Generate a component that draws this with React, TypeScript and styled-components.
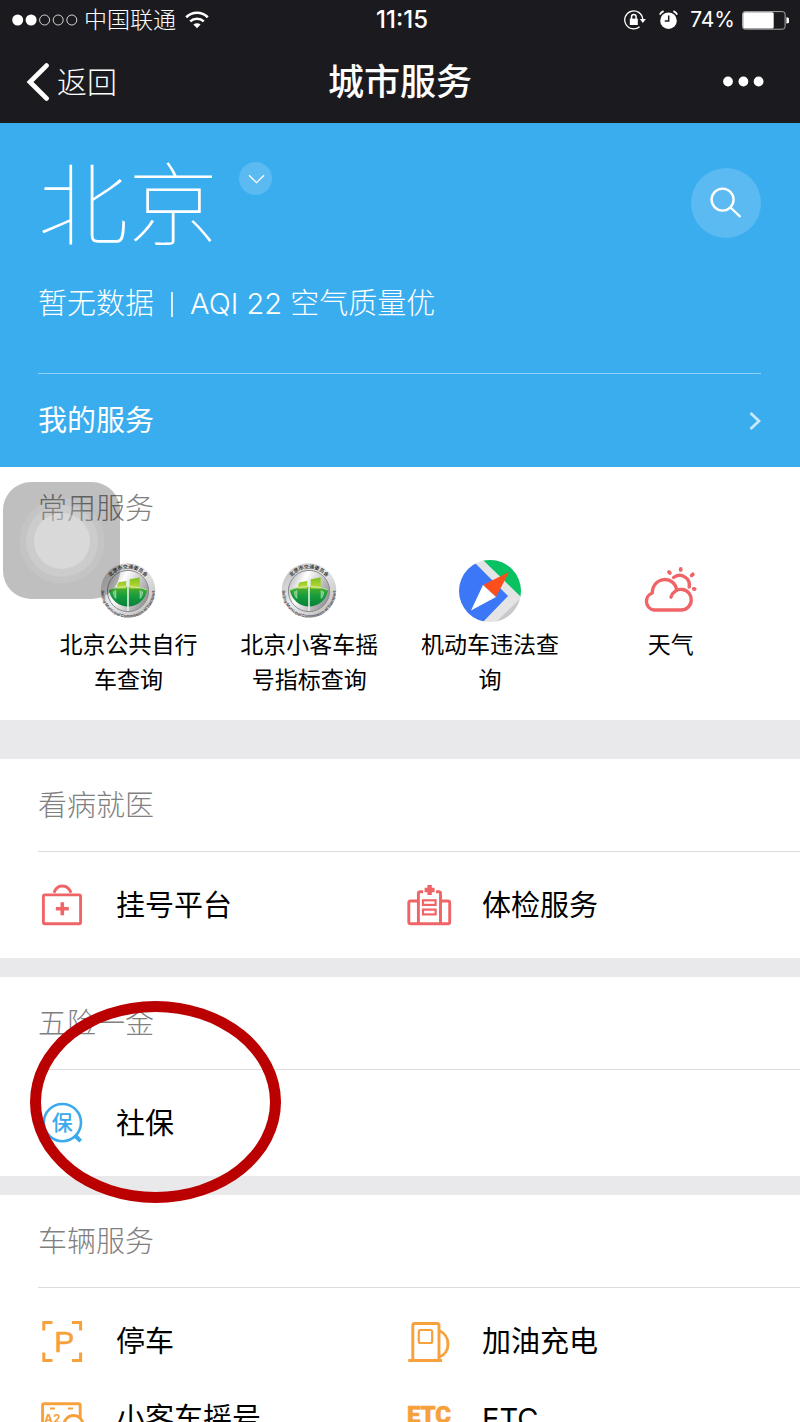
import React from "react";
import styled, { createGlobalStyle } from "styled-components";

const GlobalStyle = createGlobalStyle`
  *, *::before, *::after { box-sizing: border-box; }
  body {
    margin: 0;
    background: #ffffff;
    font-family: Inter, "Noto Sans CJK SC", sans-serif;
    color: #000000;
  }
  button { padding: 0; border: 0; background: none; color: inherit; font: inherit; cursor: pointer; }
  a { color: inherit; text-decoration: none; }
  h1, h2, p, ul { margin: 0; padding: 0; font-weight: inherit; }
  ul { list-style: none; }
  svg { display: block; flex: none; }
`;

const Page = styled.div`
  display: flex;
  flex-direction: column;
  height: 100vh;
  overflow: hidden;
`;

const Header = styled.header`
  flex: none;
  background: #1b1b1f;
  color: #ffffff;
`;

const StatusBar = styled.div`
  display: grid;
  grid-template-columns: 1fr auto 1fr;
  align-items: center;
  height: 40px;
  padding: 0 11px 0 12px;
  font-size: 23px;
  line-height: 40px;
`;

const StatusGroup = styled.div<{ $end?: boolean }>`
  display: flex;
  align-items: center;
  justify-content: ${(p) => (p.$end ? "flex-end" : "flex-start")};
  gap: ${(p) => (p.$end ? 7 : 6)}px;
`;

const Carrier = styled.span`
  margin-right: 3px;
  font-weight: 300;
`;

const Clock = styled.time`
  padding-left: 3px;
  font-size: 24px;
  font-weight: 500;
`;

const StatusIcons = styled.span`
  display: flex;
  align-items: center;
  gap: 13px;
  margin-right: 5px;
`;

const Percent = styled.span`
  font-size: 21px;
`;

const NavBar = styled.nav`
  display: grid;
  grid-template-columns: 1fr auto 1fr;
  align-items: center;
  height: 83px;
  padding: 0 26px;
`;

const BackButton = styled.button`
  display: flex;
  align-items: center;
  justify-self: start;
  gap: 7px;
  font-size: 30px;
  font-weight: 300;
  line-height: 42px;
`;

const Title = styled.h1`
  font-size: 36px;
  font-weight: 500;
  line-height: 42px;
`;

const MoreButton = styled.button`
  justify-self: end;
  margin-right: 10px;
`;

const Content = styled.main`
  flex: 1;
  min-height: 0;
  overflow-y: auto;
  scrollbar-width: none;
  background: #e9e9eb;
`;

const Hero = styled.section`
  padding: 38px 39px 0 38px;
  background: #3aadef;
  color: #ffffff;
`;

const CityRow = styled.div`
  display: flex;
  align-items: flex-start;
  height: 90px;
`;

const CityName = styled.h2`
  font-size: 90px;
  font-weight: 100;
  line-height: 90px;
`;

const RoundButton = styled.button<{ $size: number }>`
  display: flex;
  align-items: center;
  justify-content: center;
  width: ${(p) => p.$size}px;
  height: ${(p) => p.$size}px;
  border-radius: 50%;
  background: rgba(255, 255, 255, 0.17);
`;

const CityButton = styled(RoundButton)`
  margin: 1px 0 0 21px;
`;

const SearchButton = styled(RoundButton)`
  margin: 7px 0 0 auto;
`;

const AirQuality = styled.p`
  display: flex;
  align-items: center;
  margin-top: 32px;
  padding-bottom: 48px;
  border-bottom: 1px solid rgba(255, 255, 255, 0.45);
  font-size: 29px;
  font-weight: 300;
  line-height: 42px;
`;

const Divider = styled.span`
  width: 2px;
  height: 25px;
  margin: 0 17px;
  background: #d9effc;
`;

const MyServices = styled.a`
  display: flex;
  align-items: center;
  justify-content: space-between;
  height: 93px;
  font-size: 29px;
  line-height: 42px;
`;

const Frequent = styled.section`
  position: relative;
  margin-bottom: 39px;
  padding: 21px 39px 22px 38px;
  background: #ffffff;
`;

const FrequentTitle = styled.h2`
  color: #808080;
  font-size: 29px;
  font-weight: 300;
  line-height: 42px;
`;

const FrequentList = styled.ul`
  display: grid;
  grid-template-columns: repeat(4, 1fr);
  margin-top: 30px;
`;

const FrequentLink = styled.a`
  display: flex;
  flex-direction: column;
  align-items: center;
  gap: 6px;
  padding: 0 16px;
  font-size: 23px;
  line-height: 35px;
  text-align: center;
`;

const AssistiveTouch = styled.button`
  position: absolute;
  top: 15px;
  left: 3px;
  display: flex;
  align-items: center;
  justify-content: center;
  width: 117px;
  height: 117px;
  border-radius: 28px;
  background: rgba(0, 0, 0, 0.25);
`;

const Group = styled.section`
  position: relative;
  margin-bottom: 19px;
  background: #ffffff;
`;

const GroupTitle = styled.h2`
  margin-left: 38px;
  padding-top: 2px;
  border-bottom: 1px solid #dcdcdc;
  color: #808080;
  font-size: 29px;
  font-weight: 300;
  line-height: 90px;
`;

const ServiceGrid = styled.ul`
  display: grid;
  grid-template-columns: 1fr 1fr;
  padding: 15px 30px 14px 38px;
`;

const ServiceLink = styled.a`
  display: flex;
  align-items: center;
  gap: 30px;
  height: 77px;
  font-size: 29px;
  line-height: 42px;
`;

const Highlight = styled.div`
  position: absolute;
  top: 24px;
  left: 30px;
  width: 251px;
  height: 202px;
  border: 11px solid #ba0000;
  border-radius: 50%;
  z-index: 1;
  pointer-events: none;
`;

const RED = "#ef6467";
const ORANGE = "#f7a13d";
const BLUE = "#3ba9ee";

const SignalDots = () => (
  <svg width="66" height="12" viewBox="0 0 66 12" fill="none" stroke="#fff" aria-hidden="true">
    <circle cx="5.7" cy="6" r="5.5" fill="#fff" stroke="none" />
    <circle cx="19.1" cy="6" r="5.5" fill="#fff" stroke="none" />
    <circle cx="32.6" cy="6" r="5" strokeWidth="0.8" />
    <circle cx="46.2" cy="6" r="5" strokeWidth="0.8" />
    <circle cx="59.8" cy="6" r="5" strokeWidth="0.8" />
  </svg>
);

const Wifi = () => (
  <svg width="24" height="18" viewBox="0 0 24 18" fill="none" stroke="#fff" strokeWidth="2.6" aria-hidden="true">
    <path d="M1.2 6.2C7.4.2 16.6.2 22.8 6.2" />
    <path d="M5.2 10.4C9.2 6.8 14.8 6.8 18.8 10.4" />
    <path d="M8.4 13.6c2.2-1.9 5-1.9 7.2 0L12 17.2Z" fill="#fff" stroke="none" />
  </svg>
);

const RotationLock = () => (
  <svg width="22" height="20" viewBox="0 0 22 20" fill="none" stroke="#fff" strokeWidth="1.3" aria-hidden="true">
    <path d="M18.7 9A9 9 0 1 0 15.6 16.7" />
    <path d="M15.8 9h6L18.8 13Z" fill="#fff" stroke="none" />
    <rect x="5.8" y="8.6" width="8" height="6.4" fill="#fff" stroke="none" />
    <path d="M7.5 9V6.9a2.3 2.3 0 0 1 4.6 0V9" strokeWidth="1.5" />
  </svg>
);

const Alarm = () => (
  <svg width="19" height="20" viewBox="0 0 19 20" aria-hidden="true">
    <circle cx="9.5" cy="10.7" r="8.3" fill="#fff" />
    <path d="M.8 4.7A7 7 0 0 1 4.6 1.2M18.2 4.7a7 7 0 0 0-3.8-3.5" fill="none" stroke="#fff" strokeWidth="1.8" />
    <path d="M9.7 5.5v5.6H5.8" fill="none" stroke="#1b1b1f" strokeWidth="1.5" />
  </svg>
);

const Battery = () => (
  <svg width="47" height="19" viewBox="0 0 47 19" aria-hidden="true">
    <rect x="0.5" y="0.6" width="42.6" height="17.6" rx="2.5" fill="none" stroke="#a9a9ab" />
    <rect x="1.2" y="1.2" width="30.5" height="16.4" rx="1.5" fill="#fff" />
    <path d="M44.4 6.3a3 3 0 0 1 0 6.2Z" fill="#fff" />
  </svg>
);

const BackArrow = () => (
  <svg width="24" height="38" viewBox="0 0 24 38" fill="none" stroke="#fff" strokeWidth="4.8" aria-hidden="true">
    <path d="M20.5 2.6 4 19 20.5 35.4" strokeLinecap="round" />
  </svg>
);

const MoreDots = () => (
  <svg width="41" height="12" viewBox="0 0 41 12" fill="#fff" aria-hidden="true">
    <circle cx="5" cy="5.5" r="4.9" />
    <circle cx="20.4" cy="5.5" r="4.9" />
    <circle cx="35.6" cy="5.5" r="4.9" />
  </svg>
);

const TouchRings = () => (
  <svg width="86" height="86" viewBox="0 0 86 86" fill="#fff" aria-hidden="true">
    <circle cx="43" cy="43" r="42.5" fillOpacity="0.09" />
    <circle cx="43" cy="43" r="36" fillOpacity="0.14" />
    <circle cx="43" cy="43" r="28" fillOpacity="0.26" />
  </svg>
);

const Emblem = ({ id }: { id: string }) => (
  <svg width="62" height="62" viewBox="0 0 62 62" aria-hidden="true">
    <defs>
      <linearGradient id={`${id}-rim`} x1="0" y1="0" x2="1" y2="1">
        <stop offset="0" stopColor="#b5b5b5" />
        <stop offset="0.45" stopColor="#ececec" />
        <stop offset="1" stopColor="#b4b4b4" />
      </linearGradient>
      <linearGradient id={`${id}-face`} x1="0" y1="0" x2="1" y2="0.5">
        <stop offset="0" stopColor="#a3a3a8" />
        <stop offset="0.4" stopColor="#ffffff" />
        <stop offset="1" stopColor="#9c9ca0" />
      </linearGradient>
      <linearGradient id={`${id}-green`} x1="0" y1="0" x2="0" y2="1">
        <stop offset="0" stopColor="#55b02c" />
        <stop offset="0.5" stopColor="#149b3c" />
        <stop offset="1" stopColor="#08813a" />
      </linearGradient>
      <linearGradient id={`${id}-lime`} x1="0" y1="0" x2="0" y2="1">
        <stop offset="0" stopColor="#7cbf1f" />
        <stop offset="1" stopColor="#c0dc36" />
      </linearGradient>
      <path id={`${id}-top`} d="M9 30.5a22 22 0 0 1 44 0" />
      <path id={`${id}-bottom`} d="M5.4 22.8A26.8 26.8 0 1 0 56.6 22.8" />
    </defs>
    <circle cx="31" cy="30.5" r="27.3" fill={`url(#${id}-rim)`} />
    <text fontSize="5" fontWeight="700" fill="#3c3c40" textAnchor="middle">
      <textPath href={`#${id}-top`} startOffset="50%">北京市交通委员会</textPath>
    </text>
    <text fontSize="4" fontWeight="700" fill="#4c4a4e" textAnchor="middle">
      <textPath href={`#${id}-bottom`} startOffset="50%">Beijing Municipal Commission of Transport</textPath>
    </text>
    <circle cx="31" cy="31" r="20.6" fill={`url(#${id}-face)`} stroke="#8c8c8e" strokeWidth="1" />
    <path d="M11.8 29.8C18 26.6 25 26.4 31 26.4s13 .2 19.2 3.4A19.4 19.4 0 0 1 11.8 29.8Z" fill={`url(#${id}-green)`} />
    <path d="M20 28.5c0-4 1-6.4 3.2-6.4l6-1v7.4ZM32.7 19.2l10-1.6v10.9h-10Z" fill={`url(#${id}-lime)`} />
    <path d="M31 20v31" fill="none" stroke="#e4f3e6" strokeWidth="1.6" />
    <path d="M16.4 31.6c0 4.4 2.4 6.8 2.4 6.8v-8.2M45.6 31.6c0 4.4-2.4 6.8-2.4 6.8v-8.2" fill="#a9dcb4" fillOpacity="0.6" stroke="#a9dcb4" strokeWidth="0.8" />
    <path d="M12.2 29.8C23 25.5 39 25.5 49.8 29.8" fill="none" stroke="#d8e8c8" strokeWidth="0.9" />
  </svg>
);

const Compass = () => (
  <svg width="62" height="62" viewBox="0 0 62 62" aria-hidden="true">
    <defs>
      <clipPath id="compass-disc">
        <circle cx="31" cy="31" r="31" />
      </clipPath>
    </defs>
    <g clipPath="url(#compass-disc)">
      <rect width="62" height="62" fill="#e4e4e6" />
      <path d="M0 0H13L49 36 23 63H0Z" fill="#3b77f6" />
      <path d="M24 0H62V37Z" fill="#08c161" />
      <path d="M62 38 37 62H62Z" fill="#c9c8ca" />
      <path d="M50 12 24 25 37 37Z" fill="#fd4f1b" />
      <path d="M24 25 37 37 12 50.5Z" fill="#fff" />
    </g>
  </svg>
);

const Weather = () => (
  <svg width="62" height="62" viewBox="0 0 62 62" fill="none" stroke={RED} strokeWidth="3.4" strokeLinecap="round" aria-hidden="true">
    <path d="M31 37.2A10.3 10.3 0 1 1 41.2 50H14A8.8 8.8 0 0 1 12.3 33C12.7 15.5 35.5 15.5 36.6 30.6" strokeLinejoin="round" />
    <path d="M33.6 17.5A9.8 9.8 0 0 1 49.2 27" />
    <path d="M29 12.1l.9.9M40.7 9v.9M52.8 14.3l-1.2 1.2M53.8 28.9l.8.2" strokeWidth="3.8" />
  </svg>
);

const IconFrame = ({ color, children }: { color: string; children: React.ReactNode }) => (
  <svg width="48" height="47" viewBox="0 0 48 47" fill="none" stroke={color} strokeWidth="2.9" aria-hidden="true">
    {children}
  </svg>
);

const MedicalBag = () => (
  <IconFrame color={RED}>
    <rect x="5.4" y="12.9" width="37.2" height="28.9" rx="1.5" />
    <path d="M16 10.8C19 1.8 29.6 1.8 33 10.8" />
    <path d="M17.8 26.7h13M24.3 20.2v13" strokeWidth="3.6" />
  </IconFrame>
);

const Hospital = () => (
  <IconFrame color={RED}>
    <path d="M14.4 19H6.5q-1.7 0-1.7 1.8V40q0 1.7 1.7 1.7H44q1.7 0 1.7-1.7V20.8q0-1.8-1.7-1.8H36.5" />
    <path d="M14.4 41.5V11.5q0-1.8 1.8-1.8H19M36.5 41.5V11.5q0-1.8-1.8-1.8H32" />
    <rect x="19" y="18.3" width="12.6" height="4.6" strokeWidth="2.2" />
    <rect x="19" y="27.6" width="12.6" height="4.8" strokeWidth="2.2" />
    <path d="M20.6 8h10M25.6 3v10" strokeWidth="4.4" />
  </IconFrame>
);

const Insurance = () => (
  <IconFrame color={BLUE}>
    <circle cx="24.4" cy="22.6" r="18.6" strokeWidth="2.6" />
    <path d="M37.5 36 42.6 41.2" strokeWidth="4" />
    <text x="24.2" y="30.4" fontSize="21" fontWeight="500" textAnchor="middle" fill={BLUE} stroke="none">保</text>
  </IconFrame>
);

const Parking = () => (
  <IconFrame color={ORANGE}>
    <path d="M5.8 12.5V4.5H14.5M34 4.5H42.6V12.5M42.6 34.5V42.6H34M14.5 42.6H5.8V34.5" strokeWidth="3" />
    <text
      x="26.3"
      y="34"
      fontFamily="'Liberation Sans', sans-serif"
      fontSize="30"
      textAnchor="middle"
      fill={ORANGE}
      strokeWidth="0.6"
    >
      P
    </text>
  </IconFrame>
);

const GasPump = () => (
  <IconFrame color={ORANGE}>
    <path d="M8.8 42V7.5q0-2 2-2H33q2 0 2 2V42" />
    <path d="M4.2 42.5H38" />
    <rect x="14.8" y="12" width="13.4" height="13" rx="1.8" strokeWidth="2.2" />
    <path d="M35 12.5C47 17.5 47 35 35 39" />
  </IconFrame>
);

const LicensePlate = () => (
  <IconFrame color={ORANGE}>
    <rect x="4.6" y="8.8" width="37.6" height="31" rx="1.5" />
    <path d="M12 13.5h5M30 13.5h5" strokeWidth="2" />
    <text x="6" y="28" fontSize="12" fontWeight="700" fill={ORANGE} stroke="none">A2</text>
    <circle cx="35.5" cy="30" r="9.5" fill="#fff" />
  </IconFrame>
);

const EtcLogo = () => (
  <IconFrame color={ORANGE}>
    <text
      x="25"
      y="28"
      fontFamily="Roboto, sans-serif"
      fontSize="24"
      fontWeight="900"
      textAnchor="middle"
      fill={ORANGE}
      strokeWidth="0.6"
    >
      ETC
    </text>
  </IconFrame>
);

interface Service {
  name: string;
  icon: React.ReactNode;
}

const frequentServices: Service[] = [
  { name: "北京公共自行车查询", icon: <Emblem id="bike" /> },
  { name: "北京小客车摇号指标查询", icon: <Emblem id="lottery" /> },
  { name: "机动车违法查询", icon: <Compass /> },
  { name: "天气", icon: <Weather /> },
];

const groups: { title: string; services: Service[]; highlighted?: boolean }[] = [
  {
    title: "看病就医",
    services: [
      { name: "挂号平台", icon: <MedicalBag /> },
      { name: "体检服务", icon: <Hospital /> },
    ],
  },
  {
    title: "五险一金",
    services: [{ name: "社保", icon: <Insurance /> }],
    highlighted: true,
  },
  {
    title: "车辆服务",
    services: [
      { name: "停车", icon: <Parking /> },
      { name: "加油充电", icon: <GasPump /> },
      { name: "小客车摇号", icon: <LicensePlate /> },
      { name: "ETC", icon: <EtcLogo /> },
    ],
  },
];

export default function App() {
  return (
    <Page>
      <GlobalStyle />
      <Header>
        <StatusBar>
          <StatusGroup>
            <SignalDots />
            <Carrier>中国联通</Carrier>
            <Wifi />
          </StatusGroup>
          <Clock>11:15</Clock>
          <StatusGroup $end>
            <StatusIcons>
              <RotationLock />
              <Alarm />
            </StatusIcons>
            <Percent>74%</Percent>
            <Battery />
          </StatusGroup>
        </StatusBar>
        <NavBar>
          <BackButton type="button">
            <BackArrow />
            返回
          </BackButton>
          <Title>城市服务</Title>
          <MoreButton type="button" aria-label="更多">
            <MoreDots />
          </MoreButton>
        </NavBar>
      </Header>
      <Content>
        <Hero>
          <CityRow>
            <CityName>北京</CityName>
            <CityButton type="button" $size={33} aria-label="切换城市">
              <svg width="18" height="10" viewBox="0 0 18 10" fill="none" stroke="#fff" strokeWidth="1.3" aria-hidden="true">
                <path d="M2 1.2 9.5 8.6 17 1.2" />
              </svg>
            </CityButton>
            <SearchButton type="button" $size={70} aria-label="搜索">
              <svg width="32" height="32" viewBox="0 0 32 32" fill="none" stroke="#fff" strokeWidth="2.4" aria-hidden="true">
                <circle cx="12.6" cy="12.6" r="11" />
                <path d="M20.5 20.5 30.5 30" />
              </svg>
            </SearchButton>
          </CityRow>
          <AirQuality>
            暂无数据
            <Divider />
            AQI 22 空气质量优
          </AirQuality>
          <MyServices href="#my-services">
            我的服务
            <svg width="12" height="20" viewBox="0 0 12 20" fill="none" stroke="#c9e9fb" strokeWidth="2.8" aria-hidden="true">
              <path d="M1.5 2 10 10 1.5 18" />
            </svg>
          </MyServices>
        </Hero>

        <Frequent>
          <FrequentTitle>常用服务</FrequentTitle>
          <FrequentList>
            {frequentServices.map((service) => (
              <li key={service.name}>
                <FrequentLink href="#service">
                  {service.icon}
                  <span>{service.name}</span>
                </FrequentLink>
              </li>
            ))}
          </FrequentList>
          <AssistiveTouch type="button" aria-label="辅助触控">
            <TouchRings />
          </AssistiveTouch>
        </Frequent>

        {groups.map((group) => (
          <Group key={group.title}>
            <GroupTitle>{group.title}</GroupTitle>
            <ServiceGrid>
              {group.services.map((service) => (
                <li key={service.name}>
                  <ServiceLink href="#service">
                    {service.icon}
                    <span>{service.name}</span>
                  </ServiceLink>
                </li>
              ))}
            </ServiceGrid>
            {group.highlighted && <Highlight />}
          </Group>
        ))}
      </Content>
    </Page>
  );
}
